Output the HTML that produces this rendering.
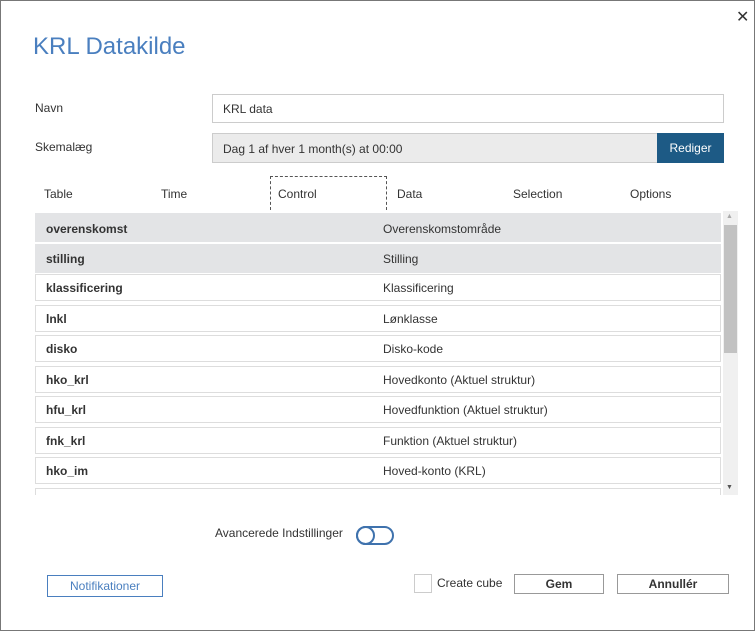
<!DOCTYPE html>
<html><head><meta charset="utf-8"><style>
*{box-sizing:border-box;margin:0;padding:0}
body{width:755px;height:631px;background:#fff;font-family:"Liberation Sans",sans-serif;font-size:12px;color:#333;position:relative;overflow:hidden;border:1px solid #777}
.a{position:absolute}
.row{position:absolute;left:34px;width:686px;height:27px;border:1px solid #ddd;background:#fff}
.row.g{background:#e3e4e6;border-color:#e3e4e6}
.row b{position:absolute;left:10px;top:6px;font-weight:bold;color:#333}
.row span{position:absolute;left:347px;top:6px}
.tab{position:absolute;top:186px;font-size:12px}
.btn{position:absolute;border:1px solid #999;background:#fff;text-align:center;font-weight:bold;line-height:18px}
</style></head><body>
<div class="a" style="left:735px;top:6px;font-size:16px;color:#333">✕</div>
<div class="a" style="left:32px;top:32px;font-size:24px;color:#4a7fbf">KRL Datakilde</div>
<div class="a" style="left:34px;top:100px">Navn</div>
<div class="a" style="left:211px;top:93px;width:512px;height:29px;border:1px solid #ccc;padding:7px 10px">KRL data</div>
<div class="a" style="left:34px;top:139px">Skemalæg</div>
<div class="a" style="left:211px;top:132px;width:446px;height:30px;border:1px solid #ccc;background:#ebebeb;padding:8px 10px">Dag 1 af hver 1 month(s) at 00:00</div>
<div class="a" style="left:656px;top:132px;width:67px;height:30px;background:#1d5a85;color:#fff;text-align:center;line-height:30px">Rediger</div>
<div class="a" style="left:269px;top:175px;width:117px;height:34px;border:1px dashed #555;border-bottom:none"></div>
<div class="tab" style="left:43px">Table</div>
<div class="tab" style="left:160px">Time</div>
<div class="tab" style="left:277px">Control</div>
<div class="tab" style="left:396px">Data</div>
<div class="tab" style="left:512px">Selection</div>
<div class="tab" style="left:629px">Options</div>
<div class="a" style="left:0;top:210px;width:755px;height:284px;overflow:hidden">
<div class="row g" style="top:2px;height:29px"><b style="left:10px;top:8px">overenskomst</b><span style="top:8px">Overenskomstområde</span></div>
<div class="row g" style="top:33px;height:29px"><b style="top:7px">stilling</b><span style="top:7px">Stilling</span></div>
<div class="row" style="top:63px"><b>klassificering</b><span>Klassificering</span></div>
<div class="row" style="top:94px"><b>lnkl</b><span>Lønklasse</span></div>
<div class="row" style="top:124px"><b>disko</b><span>Disko-kode</span></div>
<div class="row" style="top:155px"><b>hko_krl</b><span>Hovedkonto (Aktuel struktur)</span></div>
<div class="row" style="top:185px"><b>hfu_krl</b><span>Hovedfunktion (Aktuel struktur)</span></div>
<div class="row" style="top:216px"><b>fnk_krl</b><span>Funktion (Aktuel struktur)</span></div>
<div class="row" style="top:246px"><b>hko_im</b><span>Hoved-konto (KRL)</span></div>
<div class="row" style="top:277px"><b>hfu_im</b><span>Hovedfunktion (KRL)</span></div>
<div class="a" style="left:722px;top:0;width:15px;height:284px;background:#f0f0f0"></div>
<div class="a" style="left:723px;top:14px;width:13px;height:128px;background:#c2c2c2"></div>
<div class="a" style="left:725px;top:2px;font-size:7px;color:#aaa">▲</div>
<div class="a" style="left:725px;top:273px;font-size:7px;color:#555">▼</div>
</div>
<div class="a" style="left:214px;top:525px">Avancerede Indstillinger</div>
<div class="a" style="left:355px;top:525px;width:38px;height:19px;border:2px solid #3f72ad;border-radius:10px"></div>
<div class="a" style="left:355px;top:525px;width:19px;height:19px;border:2px solid #3f72ad;border-radius:50%"></div>
<div class="a" style="left:46px;top:574px;width:116px;height:22px;border:1px solid #4a7fbf;color:#4a7fbf;text-align:center;line-height:20px">Notifikationer</div>
<div class="a" style="left:413px;top:573px;width:18px;height:19px;border:1px solid #ccc"></div>
<div class="a" style="left:436px;top:575px">Create cube</div>
<div class="btn" style="left:513px;top:573px;width:90px;height:20px">Gem</div>
<div class="btn" style="left:616px;top:573px;width:112px;height:20px">Annullér</div>
</body></html>
